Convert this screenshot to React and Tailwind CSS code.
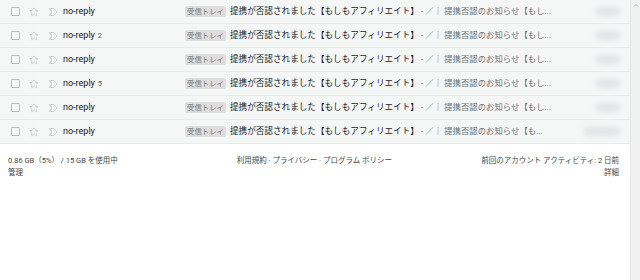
import { Star } from 'lucide-react';

const rows = [
  { count: null, tail: '【もし...', wide: false },
  { count: 2, tail: '【もし...', wide: false },
  { count: null, tail: '【もし...', wide: false },
  { count: 5, tail: '【もし...', wide: false },
  { count: null, tail: '【もし...', wide: false },
  { count: null, tail: '【も...', wide: true },
];

function Important() {
  return (
    <svg width="10" height="10" viewBox="0 0 10 10" className="shrink-0">
      <path d="M1.5 1.5h4.5l3 3.5-3 3.5H1.5l2.5-3.5z" fill="none" stroke="#c4c7c5" strokeWidth="0.9" strokeLinejoin="round" />
    </svg>
  );
}

function MailRow({ row }) {
  return (
    <div className="flex items-center h-[24px] bg-[#f5f7f7] border-b border-[#e8ebec] pl-[11px] pr-[7px] text-[#202124]">
      <div className="w-[9px] h-[9px] border border-[#bdbdbd] rounded-[1px] shrink-0" />
      <Star className="ml-[9px] w-[10px] h-[10px] text-[#c4c7c5] shrink-0" strokeWidth={1.6} />
      <div className="ml-[9px]">
        <Important />
      </div>
      <div className="ml-[5px] w-[122px] shrink-0 text-[9px] whitespace-nowrap">
        no-reply{row.count && <span className="ml-[3px] text-[7.5px] text-[#5f6368]">{row.count}</span>}
      </div>
      <span className="shrink-0 h-[11px] px-[2px] flex items-center bg-[#dedede] rounded-[2px] text-[7.4px] text-[#777] leading-none">
        受信トレイ
      </span>
      <span className="ml-[4px] text-[8.6px] whitespace-nowrap text-[#202124]">
        提携が否認されました【もしもアフィリエイト】
      </span>
      <span className="text-[8.4px] whitespace-nowrap text-[#6b6f73]">
        &nbsp;- ／｜ 提携否認のお知らせ{row.tail}
      </span>
      <div className="flex-1 flex justify-end pr-[3px]">
        <div className={`${row.wide ? 'w-[36px]' : 'w-[24px]'} h-[9px] rounded bg-[#e0e3e5] blur-[3px]`} />
      </div>
    </div>
  );
}

export default function App() {
  return (
    <div
      className="flex w-[640px] h-[280px] bg-white overflow-hidden"
      style={{ fontFamily: 'Roboto, "Noto Sans CJK JP", sans-serif' }}
    >
      <div className="w-[630px] flex flex-col">
        {rows.map((row, i) => (
          <MailRow key={i} row={row} />
        ))}
        <div className="flex justify-between px-[8px] pt-[11px] text-[7.5px] text-[#444746] leading-[12px]">
          <div>
            <div>0.86 GB（5%） / 15 GB を使用中</div>
            <div>管理</div>
          </div>
          <div className="pl-[30px]">利用規約 · プライバシー · プログラム ポリシー</div>
          <div className="text-right pr-[3px]">
            <div>前回のアカウント アクティビティ: 2 日前</div>
            <div>詳細</div>
          </div>
        </div>
      </div>
      <div className="w-[10px] h-full bg-[#f1f1f1] border-l border-[#e8e8e8] flex justify-center pt-[3px]">
        <svg width="6" height="5" viewBox="0 0 6 5">
          <path d="M1 3.5L3 1.5L5 3.5" fill="none" stroke="#b0b0b0" strokeWidth="0.8" />
        </svg>
      </div>
    </div>
  );
}
